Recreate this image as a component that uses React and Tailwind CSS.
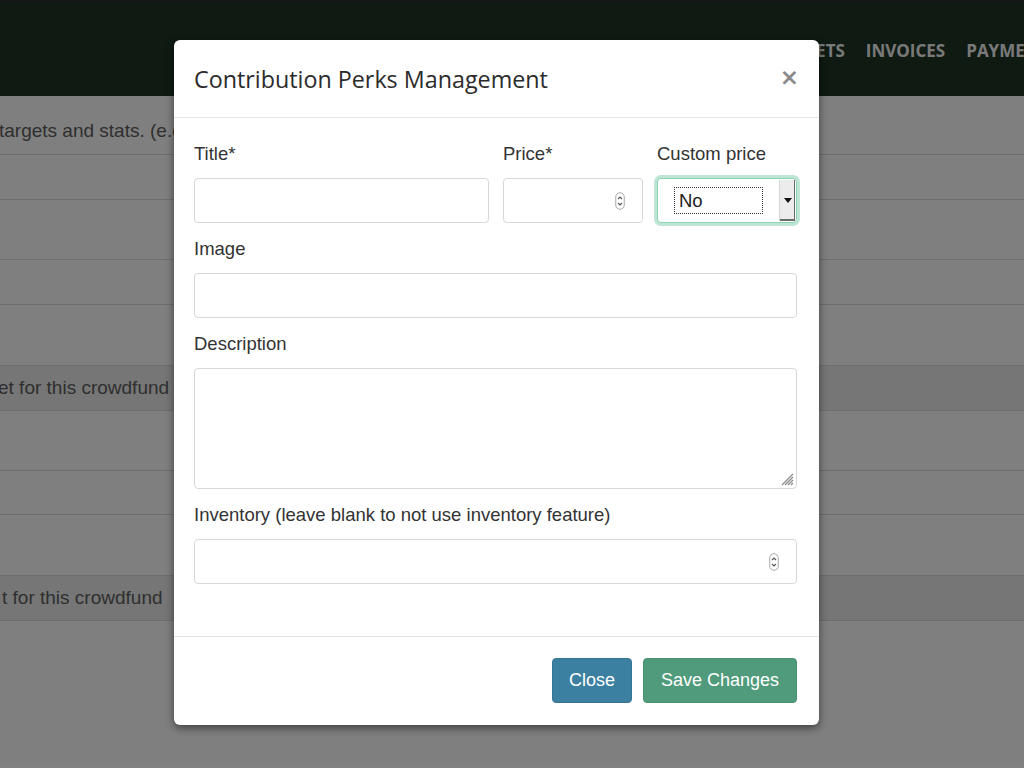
import React from 'react';

const rows = [
  { cls: "h-[59px] pt-[12px]", text: "targets and stats. (e.g. total raised)", pad: "-ml-[1px]" },
  { cls: "h-[45px]" },
  { cls: "h-[60px]" },
  { cls: "h-[45px]" },
  { cls: "h-[61px]" },
  { cls: "h-[45px] bg-[#ececec]", text: "et for this crowdfund", pad: "-ml-[2px]" },
  { cls: "h-[60px]" },
  { cls: "h-[44px]" },
  { cls: "h-[61px]" },
  { cls: "h-[45px] bg-[#ececec]", text: "t for this crowdfund", pad: "ml-[2px]" },
];

function Spinner() {
  return (
    <svg width="10" height="18" viewBox="0 0 10 18" className="shrink-0">
      <rect x="0.75" y="0.75" width="8.5" height="16.5" rx="4.25" fill="#fff" stroke="#a8a8a8" strokeWidth="1" />
      <path d="M3 7 L5 5 L7 7" fill="none" stroke="#555" strokeWidth="1.1" />
      <path d="M3 11 L5 13 L7 11" fill="none" stroke="#555" strokeWidth="1.1" />
    </svg>
  );
}

function Label({ children }) {
  return <div className="h-[24px] leading-[24px] text-[18.5px] text-[#333] mb-[13px] whitespace-nowrap pt-[1px]">{children}</div>;
}

const inputCls = "h-[45px] rounded-[4px] border border-[#d3d9d6] bg-white";

function App() {
  return (
    <div className="relative h-[768px] w-full overflow-hidden bg-white" style={{ fontFamily: '"Liberation Sans", Arial, sans-serif' }}>
      {/* page behind the dialog */}
      <div className="h-[96px] bg-[#1c3424] border-t-2 border-[#2e2e2e] flex items-start overflow-hidden">
        <nav className="flex gap-[21px] pl-[771px] pt-[36px] text-[17px] font-bold text-[#f2f2f2] whitespace-nowrap" style={{ fontFamily: '"Open Sans", sans-serif' }}>
          <span>TARGETS</span>
          <span>INVOICES</span>
          <span>PAYMENTS</span>
        </nav>
      </div>
      {rows.map((r, i) => (
        <div key={i} className={`${r.cls} flex items-center border-b border-[#dadada] text-[19px] text-[#5e5e5e] whitespace-nowrap overflow-hidden`}>
          {r.text && <span className={r.pad}>{r.text}</span>}
        </div>
      ))}

      {/* backdrop */}
      <div className="absolute inset-0 bg-black/50" />

      {/* dialog */}
      <div className="absolute left-[174px] top-[40px] w-[645px] h-[685px] bg-white rounded-[6px] shadow-[0_3px_9px_rgba(0,0,0,0.5)] flex flex-col">
        <div className="h-[78px] shrink-0 flex items-center justify-between pl-[20px] pr-[22px] border-b border-[#e5e5e5]">
          <h4 className="text-[23.3px] text-[#2b2b2b] pt-[1px]" style={{ fontFamily: '"Open Sans", sans-serif' }}>Contribution Perks Management</h4>
          <span className="text-[23px] font-bold text-[#8a8a8a] leading-none -mt-[2px] -mr-[2px]" style={{ fontFamily: '"DejaVu Sans", sans-serif' }}>×</span>
        </div>

        <div className="flex-1 pl-[20px] pr-[22px] pt-[23px] flex flex-col gap-[13px]">
          <div className="grid grid-cols-[295px_140px_140px] gap-x-[14px]">
            <div>
              <Label>Title*</Label>
              <div className={inputCls} />
            </div>
            <div>
              <Label>Price*</Label>
              <div className={`${inputCls} flex items-center justify-end pr-[17px]`}>
                <Spinner />
              </div>
            </div>
            <div>
              <Label>Custom price</Label>
              <div className="h-[45px] rounded-[4px] border border-[#8dd2b4] shadow-[0_0_0_3px_#bfe6d4] bg-white flex items-stretch p-[1px]">
                <div className="flex-1 flex items-center pl-[15px] pr-[16px]">
                  <div className="w-[89px] h-[27px] border border-dotted border-[#333] flex items-center pl-[4px] text-[18.5px] text-[#222]">No</div>
                </div>
                <div className="w-[18px] bg-[#ececec] border-l border-[#d6d6d6] shadow-[inset_-1px_-2px_0_#6a6a6a] flex items-center justify-center">
                  <svg width="8" height="5" viewBox="0 0 8 5"><path d="M0 0 L8 0 L4 5 Z" fill="#111" /></svg>
                </div>
              </div>
            </div>
          </div>

          <div>
            <Label>Image</Label>
            <div className={inputCls} />
          </div>

          <div>
            <Label>Description</Label>
            <div className="relative h-[121px] rounded-[4px] border border-[#d3d9d6] bg-white">
              <svg width="14" height="14" viewBox="0 0 14 14" className="absolute right-[2px] bottom-[2px]">
                <path d="M13 2 L2 13 M13 5 L5 13 M13 8 L8 13 M13 11 L11 13" stroke="#8a8a8a" strokeWidth="1.2" />
              </svg>
            </div>
          </div>

          <div>
            <Label>Inventory (leave blank to not use inventory feature)</Label>
            <div className={`${inputCls} flex items-center justify-end pr-[17px]`}>
              <Spinner />
            </div>
          </div>
        </div>

        <div className="h-[89px] shrink-0 border-t border-[#e5e5e5] flex items-start justify-end gap-[11px] pt-[21px] pr-[22px]">
          <button className="h-[45px] w-[80px] rounded-[4px] bg-[#3b80a1] border border-[#357494] text-white text-[18px]">Close</button>
          <button className="h-[45px] w-[154px] rounded-[4px] bg-[#4f9b7c] border border-[#48916f] text-white text-[18px]">Save Changes</button>
        </div>
      </div>
    </div>
  );
}

export default App;
